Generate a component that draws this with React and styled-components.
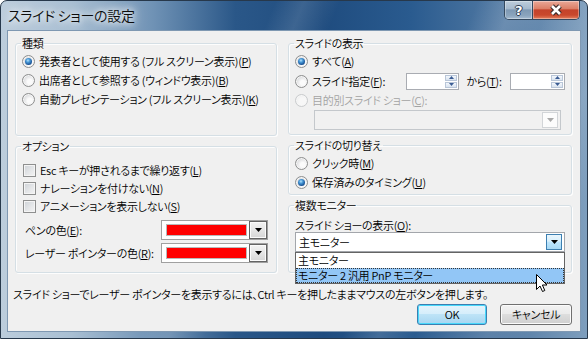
import React from "react";
import styled, { createGlobalStyle, css } from "styled-components";

const UI = `"Noto Sans CJK JP", "Noto Sans", sans-serif`;

const GlobalStyle = createGlobalStyle`
  html, body { margin: 0; padding: 0; background: #ffffff; }
  body { font-family: ${UI}; }
  * { box-sizing: border-box; }
`;

const Window = styled.div`
  position: relative;
  width: 588px;
  height: 339px;
  display: flex;
  flex-direction: column;
  border: 1px solid #27384b;
  border-radius: 7px 7px 0 0;
  overflow: hidden;
  background:
    linear-gradient(112deg, transparent 0 38%, rgba(255,255,255,0.12) 42%, transparent 47%,
      transparent 66%, rgba(255,255,255,0.14) 71%, transparent 76%, rgba(255,255,255,0.1) 86%, transparent 92%),
    linear-gradient(90deg, #bccddc 0%, #a9bfd3 12%, #6f92b5 26%, #2a5788 40%, #1f4c7f 55%, #2a5b8f 70%, #5078a2 85%, #7e9ebd 100%);
  font: 350 11px/1 ${UI};
  letter-spacing: -0.3px;
  font-feature-settings: "palt";
  color: #000;
`;

const TitleBar = styled.div`
  height: 29px;
  flex: none;
  display: flex;
  align-items: flex-start;
  justify-content: space-between;
  padding: 0 7px 0 7px;
`;

const Title = styled.div`
  margin-top: 6px;
  font-size: 14px;
  line-height: 17px;
  letter-spacing: -0.3px;
  color: #0b0b0b;
  text-shadow: 0 0 6px #ffffff, 0 0 10px rgba(255,255,255,0.9), 0 0 16px rgba(255,255,255,0.7);
`;

const Caption = styled.div`
  display: flex;
  height: 19px;
  border: 1px solid #34495f;
  border-top: none;
  border-radius: 0 0 5px 5px;
  overflow: hidden;
`;

const CaptionButton = styled.div`
  display: flex;
  align-items: center;
  justify-content: center;
  height: 100%;
  width: ${(p) => p.$w}px;
  box-shadow: inset 0 0 0 1px rgba(255,255,255,0.35);
  ${(p) =>
    p.$close
      ? css`
          background: linear-gradient(#e9a898 0%, #dc8068 42%, #c4432b 50%, #c9482d 78%, #e3805f 100%);
        `
      : css`
          border-right: 1px solid #34495f;
          background: linear-gradient(#bdcddc 0%, #a6bace 42%, #7e99b4 50%, #8aa4bd 80%, #a5bbd0 100%);
        `}
`;

const HelpGlyph = styled.span`
  font: bold 13px/1 "DejaVu Sans", sans-serif;
  color: #fff;
  text-shadow: 1px 0 #2b3d52, -1px 0 #2b3d52, 0 1px #2b3d52, 0 -1px #2b3d52;
`;

const Client = styled.div`
  flex: 1;
  margin: 0 6px 6px;
  border: 1px solid #7f98b2;
  background: #f0f0f0;
  padding: 6px 8px 0 7px;
  display: flex;
  flex-direction: column;
`;

const Columns = styled.div`
  display: grid;
  grid-template-columns: 262px 284px;
  column-gap: 11px;
`;

const Column = styled.div`
  display: flex;
  flex-direction: column;
  gap: 4px;
`;

const Group = styled.fieldset`
  margin: 0;
  min-width: 0;
  height: ${(p) => p.$h}px;
  padding: ${(p) => p.$pt || 3}px 6px 0 6px;
  border: 1px solid #d5dfe5;
  border-radius: 3px;
  box-shadow: inset 1px 1px 0 #fdfdfd, 1px 1px 0 #fdfdfd;
`;

const Legend = styled.legend`
  padding: 0 1px;
  margin-left: -1px;
  font-size: 11px;
  line-height: 12px;
`;

const Row = styled.div`
  display: flex;
  align-items: center;
  height: ${(p) => p.$h || 19}px;
  gap: 4px;
  white-space: nowrap;
  color: ${(p) => (p.$disabled ? "#a3a3a3" : "#000")};
`;

const Radio = styled.span`
  flex: none;
  width: 13px;
  height: 13px;
  border-radius: 50%;
  display: inline-flex;
  align-items: center;
  justify-content: center;
  border: 1px solid ${(p) => (p.$disabled ? "#c9cbcd" : "#8e8f8f")};
  background: ${(p) =>
    p.$disabled
      ? "radial-gradient(circle at 60% 60%, #f7f7f7 0 40%, #e6e6e6 100%)"
      : "radial-gradient(circle at 62% 62%, #fbfbfb 0 25%, #d9dadc 70%, #c3c6ca 100%)"};
  box-shadow: inset 0 0 0 1px #f6f6f6;
  ${(p) =>
    p.$checked &&
    css`
      &::after {
        content: "";
        width: 7px;
        height: 7px;
        border-radius: 50%;
        background: radial-gradient(circle at 42% 35%, #b5e3fb 0, #4a9ad8 30%, #1b5597 68%, #0e3a70 100%);
      }
    `}
`;

const Check = styled.span`
  flex: none;
  width: 13px;
  height: 13px;
  margin-left: 1px;
  border: 1px solid #8e8f8f;
  background: linear-gradient(135deg, #cdd1d6 0%, #e4e6e8 55%, #f4f4f4 100%);
  box-shadow: inset 0 0 0 1px #f4f4f4;
`;

const Label = styled.span`
  display: inline-block;
  width: ${(p) => (p.$w ? `${p.$w}px` : "auto")};
  margin-left: ${(p) => p.$ml || 0}px;
`;

const SpinBox = styled.div`
  display: flex;
  justify-content: flex-end;
  width: ${(p) => p.$w}px;
  height: 17px;
  border: 1px solid #a9acb2;
  background: #fff;
  padding: 1px;
`;

const SpinButtons = styled.div`
  width: 12px;
  display: flex;
  flex-direction: column;
  gap: 1px;
`;

const SpinHalf = styled.div`
  flex: 1;
  display: flex;
  align-items: center;
  justify-content: center;
  border: 1px solid #b9c6d8;
  background: linear-gradient(#f3f7fc, #d9e3ef);
`;

const Combo = styled.div`
  position: relative;
  display: flex;
  align-items: center;
  justify-content: space-between;
  width: ${(p) => p.$w}px;
  height: 20px;
  margin-left: ${(p) => p.$ml || 0}px;
  margin-top: ${(p) => p.$mt || 0}px;
  padding: 0 2px 0 3px;
  border: 1px solid ${(p) => (p.$disabled ? "#c4c8cc" : "#a3a6ab")};
  background: ${(p) => (p.$disabled ? "#f1f1f1" : "#fff")};
`;

const DropButton = styled.div`
  width: 16px;
  height: 16px;
  display: flex;
  align-items: center;
  justify-content: center;
  ${(p) =>
    p.$disabled
      ? css`
          border: 1px solid #d2d5d8;
          background: #fcfcfc;
        `
      : p.$hot
      ? css`
          border: 1px solid #3c7fb1;
          background: linear-gradient(#eaf6fd 0%, #d9f0fc 45%, #bee6fd 50%, #a7d9f5 100%);
        `
      : css`
          border: 1px solid #707070;
          box-shadow: inset 0 0 0 1px #fcfcfc;
          background: linear-gradient(#f2f2f2 0%, #ebebeb 45%, #dddddd 50%, #cfcfcf 100%);
        `}
`;

const ColorRow = styled.div`
  display: flex;
  align-items: center;
  height: 20px;
  margin-top: ${(p) => p.$mt}px;
  white-space: nowrap;
`;

const ColorCombo = styled.div`
  display: flex;
  align-items: center;
  justify-content: space-between;
  width: 107px;
  height: 20px;
  border: 1px solid #a0a0a0;
  background: #fff;
  padding: 0 0 0 4px;
`;

const Swatch = styled.div`
  width: 81px;
  height: 12px;
  background: #ff0000;
  border: 1px solid #b9b9b9;
`;

const ColorButton = styled.div`
  width: 18px;
  height: 18px;
  display: flex;
  align-items: center;
  justify-content: center;
  border: 1px solid #646464;
  box-shadow: inset 0 0 0 1px #fbfbfb;
  background: linear-gradient(#f3f3f3 0%, #e6e6e6 50%, #d6d6d6 100%);
`;

const MonitorLabel = styled.div`
  height: 14px;
  line-height: 14px;
  white-space: nowrap;
`;

const DropList = styled.div`
  position: absolute;
  top: 19px;
  left: -1px;
  width: 270px;
  border: 1px solid #646464;
  background: #fff;
  z-index: 2;
`;

const ListItem = styled.div`
  height: 15px;
  line-height: 15px;
  padding-left: 2px;
  white-space: nowrap;
  ${(p) =>
    p.$selected &&
    css`
      background: #92c6f6;
      outline: 1px dotted #333;
      outline-offset: -1px;
    `}
`;

const Footer = styled.div`
  margin: 14px 0 0 -2px;
  height: 14px;
  line-height: 14px;
  white-space: nowrap;
`;

const ButtonRow = styled.div`
  display: flex;
  justify-content: flex-end;
  gap: 13px;
  margin-top: 3px;
`;

const Button = styled.div`
  width: ${(p) => p.$w}px;
  height: 21px;
  display: flex;
  align-items: center;
  justify-content: center;
  border-radius: 3px;
  ${(p) =>
    p.$default
      ? css`
          border: 1px solid #3c7fb1;
          box-shadow: inset 0 0 0 1px #48d8fb;
          background: linear-gradient(#e5f4fc 0%, #d6eefb 45%, #bde3f7 50%, #a7d6f1 100%);
        `
      : css`
          border: 1px solid #707070;
          box-shadow: inset 0 0 0 1px #fbfbfb;
          background: linear-gradient(#f2f2f2 0%, #ebebeb 45%, #dddddd 50%, #cfcfcf 100%);
        `}
`;

const Cursor = styled.svg`
  position: absolute;
  left: 534px;
  top: 272px;
  z-index: 3;
`;

const Arrow = ({ color = "#000", w = 7 }) => (
  <svg width={w} height={4} viewBox="0 0 7 4">
    <path d="M0 0 H7 L3.5 4 Z" fill={color} />
  </svg>
);

const SpinArrows = () => (
  <SpinButtons>
    <SpinHalf>
      <svg width="5" height="3" viewBox="0 0 5 3">
        <path d="M0 3 H5 L2.5 0 Z" fill="#3b5c93" />
      </svg>
    </SpinHalf>
    <SpinHalf>
      <svg width="5" height="3" viewBox="0 0 5 3">
        <path d="M0 0 H5 L2.5 3 Z" fill="#3b5c93" />
      </svg>
    </SpinHalf>
  </SpinButtons>
);

const kinds = [
  { text: "発表者として使用する (フル スクリーン表示)(", key: "P", checked: true },
  { text: "出席者として参照する (ウィンドウ表示)(", key: "B" },
  { text: "自動プレゼンテーション (フル スクリーン表示)(", key: "K" },
];

const options = [
  { text: "Esc キーが押されるまで繰り返す(", key: "L" },
  { text: "ナレーションを付けない(", key: "N" },
  { text: "アニメーションを表示しない(", key: "S" },
];

export default function App() {
  return (
    <>
      <GlobalStyle />
      <Window>
        <TitleBar>
          <Title>スライド ショーの設定</Title>
          <Caption>
            <CaptionButton $w={28}>
              <HelpGlyph>?</HelpGlyph>
            </CaptionButton>
            <CaptionButton $w={46} $close>
              <svg width="14" height="12" viewBox="0 0 14 12">
                <path d="M3 2 L11 10 M11 2 L3 10" stroke="#3a2a2a" strokeWidth="5" />
                <path d="M3 2 L11 10 M11 2 L3 10" stroke="#ffffff" strokeWidth="2.6" />
              </svg>
            </CaptionButton>
          </Caption>
        </TitleBar>

        <Client>
          <Columns>
            <Column>
              <Group $h={99}>
                <Legend>種類</Legend>
                {kinds.map((k) => (
                  <Row key={k.key}>
                    <Radio $checked={k.checked} />
                    <span>
                      {k.text}
                      <u>{k.key}</u>)
                    </span>
                  </Row>
                ))}
              </Group>

              <Group $h={133} $pt={9}>
                <Legend>オプション</Legend>
                {options.map((o) => (
                  <Row key={o.key} $h={18}>
                    <Check />
                    <span>
                      {o.text}
                      <u>{o.key}</u>)
                    </span>
                  </Row>
                ))}
                <ColorRow $mt={5}>
                  <Label $w={136} $ml={3}>
                    ペンの色(<u>E</u>):
                  </Label>
                  <ColorCombo>
                    <Swatch />
                    <ColorButton>
                      <Arrow />
                    </ColorButton>
                  </ColorCombo>
                </ColorRow>
                <ColorRow $mt={3}>
                  <Label $w={136} $ml={3}>
                    レーザー ポインターの色(<u>R</u>):
                  </Label>
                  <ColorCombo>
                    <Swatch />
                    <ColorButton>
                      <Arrow />
                    </ColorButton>
                  </ColorCombo>
                </ColorRow>
              </Group>
            </Column>

            <Column>
              <Group $h={98}>
                <Legend>スライドの表示</Legend>
                <Row>
                  <Radio $checked />
                  <span>
                    すべて(<u>A</u>)
                  </span>
                </Row>
                <Row $h={20}>
                  <Radio />
                  <Label $w={90}>
                    スライド指定(<u>F</u>):
                  </Label>
                  <SpinBox $w={54}>
                    <SpinArrows />
                  </SpinBox>
                  <Label $w={40} $ml={3}>
                    から(<u>T</u>):
                  </Label>
                  <SpinBox $w={55}>
                    <SpinArrows />
                  </SpinBox>
                </Row>
                <Row $disabled>
                  <Radio $disabled />
                  <span>
                    目的別スライド ショー(<u>C</u>):
                  </span>
                </Row>
                <Combo $w={247} $ml={19} $disabled>
                  <span />
                  <DropButton $disabled>
                    <Arrow color="#a9a9a9" />
                  </DropButton>
                </Combo>
              </Group>

              <Group $h={56}>
                <Legend>スライドの切り替え</Legend>
                <Row>
                  <Radio />
                  <span>
                    クリック時(<u>M</u>)
                  </span>
                </Row>
                <Row>
                  <Radio $checked />
                  <span>
                    保存済みのタイミング(<u>U</u>)
                  </span>
                </Row>
              </Group>

              <Group $h={74} $pt={7}>
                <Legend>複数モニター</Legend>
                <MonitorLabel>
                  スライド ショーの表示(<u>O</u>):
                </MonitorLabel>
                <Combo $w={270}>
                  <span>主モニター</span>
                  <DropButton $hot>
                    <Arrow />
                  </DropButton>
                  <DropList>
                    <ListItem>主モニター</ListItem>
                    <ListItem $selected>モニター 2 汎用 PnP モニター</ListItem>
                  </DropList>
                </Combo>
              </Group>
            </Column>
          </Columns>

          <Footer>
            スライド ショーでレーザー ポインターを表示するには、Ctrl キーを押したままマウスの左ボタンを押します。
          </Footer>

          <ButtonRow>
            <Button $w={70} $default>
              OK
            </Button>
            <Button $w={72}>キャンセル</Button>
          </ButtonRow>
        </Client>

        <Cursor width="13" height="20" viewBox="0 0 13 20">
          <path
            d="M1.5 1.5 V16.5 L5 13 L7.5 18.5 L9.8 17.5 L7.4 12 H12 Z"
            fill="#fff"
            stroke="#000"
            strokeWidth="1"
            strokeLinejoin="miter"
          />
        </Cursor>
      </Window>
    </>
  );
}
